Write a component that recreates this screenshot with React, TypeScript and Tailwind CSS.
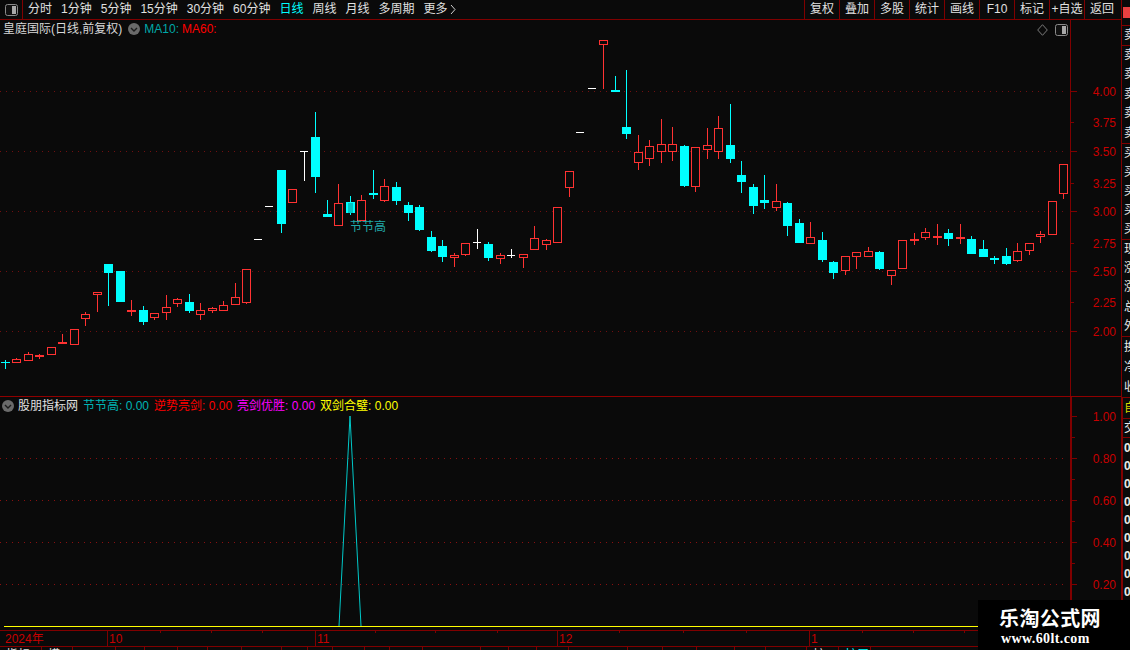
import React from "react";

type C = [number, number, number, number, number, "r" | "c" | "w"];
// x0, wickTop, wickBottom, bodyTop, bodyBottom, colour
const candles: C[] = [
  [1, 360, 369, 362, 363, "c"], [12, 358, 363, 359, 363, "r"], [24, 352, 361, 354, 361, "r"], [35, 354, 359, 355, 357, "r"],
  [47, 347, 355, 347, 355, "r"], [58, 334, 344, 342, 344, "r"], [70, 329, 345, 329, 345, "r"], [81, 312, 326, 314, 319, "r"],
  [93, 292, 312, 292, 295, "r"], [104, 264, 306, 264, 273, "c"], [116, 271, 302, 271, 302, "c"], [127, 300, 316, 310, 312, "r"],
  [139, 306, 325, 310, 322, "c"], [150, 313, 320, 313, 318, "r"], [162, 295, 320, 307, 313, "r"], [173, 298, 307, 299, 304, "r"],
  [185, 294, 313, 302, 311, "c"], [196, 303, 320, 310, 315, "r"], [208, 307, 313, 308, 311, "r"], [219, 301, 311, 305, 311, "r"],
  [231, 283, 305, 297, 305, "r"], [242, 269, 304, 269, 303, "r"], [254, 239, 240, 239, 240, "w"], [265, 206, 207, 206, 207, "w"],
  [277, 170, 233, 170, 224, "c"], [288, 189, 203, 189, 203, "r"], [300, 151, 181, 151, 152, "w"], [311, 112, 193, 137, 177, "c"],
  [323, 200, 217, 214, 217, "c"], [334, 184, 226, 203, 226, "r"], [346, 196, 215, 202, 213, "c"], [357, 195, 221, 200, 221, "r"],
  [369, 170, 199, 193, 195, "c"], [380, 179, 202, 186, 201, "r"], [392, 182, 205, 187, 201, "c"], [404, 202, 221, 205, 213, "c"],
  [415, 205, 231, 207, 230, "c"], [427, 231, 252, 237, 251, "c"], [438, 240, 262, 246, 257, "c"], [450, 253, 267, 255, 258, "r"],
  [461, 243, 256, 243, 255, "r"], [473, 229, 249, 242, 243, "w"], [484, 242, 261, 244, 258, "c"], [496, 253, 264, 255, 259, "r"],
  [507, 249, 258, 255, 256, "w"], [519, 254, 268, 254, 258, "r"], [530, 226, 250, 238, 250, "r"], [542, 239, 250, 240, 245, "r"],
  [553, 207, 243, 207, 243, "r"], [565, 171, 197, 171, 188, "r"], [576, 132, 133, 132, 133, "w"], [588, 88, 89, 88, 89, "w"],
  [599, 40, 89, 40, 45, "r"], [611, 76, 92, 90, 92, "c"], [622, 70, 139, 127, 134, "c"], [634, 135, 170, 152, 163, "r"],
  [645, 140, 166, 146, 159, "r"], [657, 119, 163, 144, 152, "r"], [668, 127, 161, 144, 152, "r"], [680, 145, 187, 146, 186, "c"],
  [691, 147, 192, 147, 187, "r"], [703, 128, 159, 145, 150, "r"], [714, 116, 159, 128, 152, "r"], [726, 104, 163, 145, 159, "c"],
  [737, 161, 193, 175, 182, "c"], [749, 184, 214, 187, 206, "c"], [760, 175, 209, 200, 203, "c"], [772, 184, 211, 201, 208, "r"],
  [783, 202, 236, 203, 226, "c"], [795, 219, 243, 223, 243, "c"], [806, 222, 244, 237, 244, "r"], [818, 232, 262, 240, 260, "c"],
  [829, 261, 279, 262, 273, "c"], [841, 256, 275, 256, 271, "r"], [852, 252, 269, 252, 257, "r"], [864, 247, 257, 251, 257, "r"],
  [875, 251, 270, 252, 269, "c"], [887, 270, 285, 270, 276, "r"], [898, 240, 269, 240, 269, "r"], [910, 233, 245, 239, 241, "r"],
  [921, 228, 240, 232, 238, "r"], [933, 224, 245, 236, 238, "r"], [944, 229, 246, 233, 239, "c"], [956, 224, 244, 237, 239, "r"],
  [967, 236, 254, 239, 254, "c"], [979, 240, 257, 249, 257, "c"], [990, 256, 264, 258, 260, "c"], [1002, 248, 265, 256, 264, "c"],
  [1013, 243, 262, 251, 261, "r"], [1025, 243, 255, 243, 251, "r"], [1036, 231, 243, 234, 237, "r"], [1048, 201, 235, 201, 235, "r"],
  [1059, 164, 199, 164, 194, "r"],
];

const RED = "#ff3232";
const CYAN = "#00ffff";
const LINE = "#800000";
const AXT = "#c80000";

function Candle({ c }: { c: C }) {
  const [x, wt, wb, bt, bb, k] = c;
  if (k === "w") {
    return (
      <g>
        <rect x={x + 4} y={wt} width={1} height={wb - wt} fill="#fff" />
        <rect x={x} y={bt} width={8} height={1} fill="#fff" />
      </g>
    );
  }
  const col = k === "r" ? RED : CYAN;
  const wick = <rect x={x + 4} y={wt} width={1} height={wb - wt} fill={col} />;
  if (k === "c" || bb - bt <= 2) {
    return (
      <g>
        {wick}
        <rect x={x} y={bt} width={9} height={Math.max(bb - bt, 1)} fill={col} />
      </g>
    );
  }
  return (
    <g>
      {wick}
      <rect x={x + 0.5} y={bt + 0.5} width={8} height={bb - bt - 1} fill="#0a0a0a" stroke={col} strokeWidth={1} />
    </g>
  );
}

function Chevron() {
  return (
    <svg width="12" height="12" viewBox="0 0 12 12" className="shrink-0">
      <circle cx="6" cy="6" r="6" fill="#6a6a6a" />
      <path d="M3 5 L6 8 L9 5" fill="none" stroke="#1c1c1c" strokeWidth="1.4" />
    </svg>
  );
}

function PanelIcon() {
  return (
    <svg width="13" height="12" viewBox="0 0 13 12">
      <rect x="0.5" y="0.5" width="12" height="11" rx="2" fill="#111" stroke="#8a8a8a" />
      <rect x="7" y="2" width="4" height="8" fill="#a8a8a8" />
    </svg>
  );
}

const Toolbar = () => {
  const left = ["分时", "1分钟", "5分钟", "15分钟", "30分钟", "60分钟", "日线", "周线", "月线", "多周期", "更多"];
  const right = ["复权", "叠加", "多股", "统计", "画线", "F10", "标记", "+自选", "返回"];
  return (
    <div className="flex h-[20px] shrink-0 items-stretch border-b border-[#800000] text-[12px] leading-[19px] text-[#e0e0e0]">
      <div className="flex w-[23px] shrink-0 items-center justify-center border-r border-[#800000]">
        <PanelIcon />
      </div>
      <div className="flex flex-1 gap-[9px] pl-[5px]">
        {left.map((t) => (
          <span key={t} className={t === "日线" ? "text-[#00ffff]" : ""}>
            {t}
          </span>
        ))}
        <svg width="6" height="19" viewBox="0 0 6 19" className="-ml-[7px]">
          <path d="M1 5 L5 9.5 L1 14" fill="none" stroke="#d0d0d0" />
        </svg>
      </div>
      {right.map((t) => (
        <div key={t} className="flex w-[35px] shrink-0 justify-center whitespace-nowrap border-l border-[#800000]">
          {t}
        </div>
      ))}
      <div className="w-[2px] shrink-0" />
    </div>
  );
};

const priceLabels: [string, number, boolean][] = [
  ["4.00", 91, true], ["3.75", 122, false], ["3.50", 151, true], ["3.25", 183, false], ["3.00", 211, true],
  ["2.75", 243, false], ["2.50", 271, true], ["2.25", 302, false], ["2.00", 331, true],
];

const subLabels: [string, number][] = [["1.00", 416], ["0.80", 458], ["0.60", 500], ["0.40", 542], ["0.20", 584]];
const subMinor = [437, 479, 521, 563, 605];

const fontStack = { fontFamily: '"Liberation Sans","Noto Sans CJK SC",sans-serif' };

function AxisLabels({ items }: { items: [string, number][] }) {
  return (
    <>
      {items.map(([t, y]) => (
        <text key={t} x="1116" y={y + 5} textAnchor="end" fontSize="12" fill={AXT} style={fontStack}>
          {t}
        </text>
      ))}
    </>
  );
}

const MainPane = () => (
  <div className="relative flex h-[376px] shrink-0">
    <svg width="1070" height="376" viewBox="0 20 1070 376" className="block shrink-0">
      {priceLabels.filter((p) => p[2]).map((p) => (
        <line key={p[0]} x1="0" x2="1068" y1={p[1] + 0.5} y2={p[1] + 0.5} stroke="#701010" strokeDasharray="1 5" />
      ))}
      {candles.map((c) => (
        <Candle key={c[0]} c={c} />
      ))}
      <rect x="348" y="203" width="5" height="10" fill="#00c4c4" />
      <text x="350" y="231" fontSize="12" fill="#20a8a8" style={fontStack}>
        节节高
      </text>
    </svg>
    <svg width="51" height="376" viewBox="1070 20 51 376" className="block shrink-0">
      <rect x="1070" y="20" width="1" height="376" fill={LINE} />
      {priceLabels.map((p) => (
        <rect key={p[0]} x="1071" y={p[1]} width={p[2] ? 6 : 3} height="1" fill={LINE} />
      ))}
      <AxisLabels items={priceLabels.map((p) => [p[0], p[1]] as [string, number])} />
    </svg>
    <div className="absolute left-[3px] top-0 flex h-[18px] items-center text-[12px]">
      <span className="text-[#d8d8d8]">皇庭国际(日线,前复权)</span>
      <span className="ml-[6px]">
        <Chevron />
      </span>
      <span className="ml-[4px] text-[#00a8a8]">MA10:</span>
      <span className="ml-[3px] text-[#ff0000]">MA60:</span>
    </div>
    <div className="absolute left-[1037px] top-[4px] flex items-center gap-[7px]">
      <svg width="11" height="12" viewBox="0 0 11 12">
        <path d="M5.5 0.7 L10.3 6 L5.5 11.3 L0.7 6 Z" fill="none" stroke="#7a7a7a" />
      </svg>
      <PanelIcon />
    </div>
  </div>
);

const legend: [string, string][] = [
  ["节节高: 0.00", "text-[#00b4b4]"],
  ["逆势亮剑: 0.00", "text-[#ff0000]"],
  ["亮剑优胜: 0.00", "text-[#ff00ff]"],
  ["双剑合璧: 0.00", "text-[#ffff00]"],
];

const SubPane = () => (
  <div className="relative flex h-[233px] shrink-0">
    <svg width="1070" height="233" viewBox="0 397 1070 233" className="block shrink-0">
      {subLabels.slice(1).map((p) => (
        <line key={p[0]} x1="0" x2="1068" y1={p[1] + 0.5} y2={p[1] + 0.5} stroke="#8a1010" strokeDasharray="1 5" />
      ))}
      <polyline points="339,626 350,416 361,626" fill="none" stroke="#00c8c8" strokeWidth="1" />
      <rect x="4" y="626" width="1066" height="1" fill="#ffff00" />
    </svg>
    <svg width="51" height="233" viewBox="1070 397 51 233" className="block shrink-0">
      <rect x="1070" y="397" width="2" height="233" fill={LINE} />
      {subLabels.map((p) => (
        <rect key={p[0]} x="1072" y={p[1]} width="5" height="1" fill={LINE} />
      ))}
      {subMinor.map((y) => (
        <rect key={y} x="1072" y={y} width="3" height="1" fill={LINE} />
      ))}
      <AxisLabels items={subLabels} />
    </svg>
    <div className="absolute left-[2px] top-[2px] flex h-[14px] items-center text-[12px]">
      <Chevron />
      <span className="ml-[4px] text-[#e0e0e0]">股朋指标网</span>
      <div className="ml-[5px] flex gap-[5px]">
        {legend.map(([t, c]) => (
          <span key={t} className={`whitespace-pre ${c}`}>
            {t}
          </span>
        ))}
      </div>
    </div>
  </div>
);

const months: [string, number][] = [["2024年", 0], ["10", 107], ["11", 315], ["12", 557], ["1", 809]];
const smallTicks = [160, 211, 262, 375, 435, 497, 619, 683, 746, 862, 913, 964];

const TimeAxis = () => (
  <div className="h-[17px] shrink-0 border-y border-[#800000]">
    <svg width="1121" height="15" viewBox="0 631 1121 15" className="block">
      {months.slice(1).map(([, x]) => (
        <rect key={x} x={x} y="631" width="1" height="15" fill={LINE} />
      ))}
      {smallTicks.map((x) => (
        <rect key={x} x={x} y="631" width="1" height="2" fill={LINE} />
      ))}
      {months.map(([t, x]) => (
        <text key={t} x={x === 0 ? 5 : x + 2} y="643" fontSize="12" fill={AXT} style={fontStack}>
          {t}
        </text>
      ))}
    </svg>
  </div>
);

const tabs: [number, string, string?][] = [
  [42, "指标"], [31, "模"], [43, ""], [29, ""], [33, ""], [30, ""], [34, ""], [40, ""], [26, ""], [25, ""], [32, ""], [25, ""],
  [33, ""], [58, ""], [28, ""], [28, ""], [32, ""], [59, ""], [35, ""], [34, ""], [38, ""], [31, ""], [41, ""],
  [32, "扩"], [32, "扩展", "text-[#00ffff]"],
];

const BottomTabs = () => (
  <div className="flex h-[3px] shrink-0 overflow-hidden text-[12px] leading-[16px] text-[#e0e0e0]">
    {tabs.map(([w, t, c], i) => (
      <div key={i} className={`shrink-0 border-r border-[#800000] pl-[6px] ${c ?? ""}`} style={{ width: w }}>
        {t}
      </div>
    ))}
  </div>
);

const Clip = ({ chars, h, step, cls = "text-[#e8e8e8]" }: { chars: string; h: number; step: number; cls?: string }) => (
  <div className={`shrink-0 overflow-hidden border-b border-[#800000] pl-[2px] ${cls}`} style={{ height: h, lineHeight: `${step}px` }}>
    {chars.split("").map((c, i) => (
      <div key={i} className="whitespace-nowrap">
        {c}
      </div>
    ))}
  </div>
);

const SideColumn = () => (
  <div className="flex h-[650px] w-[9px] shrink-0 flex-col overflow-hidden border-l border-[#800000] text-[12px]">
    <div className="h-[26px] shrink-0 border-b border-[#800000] pl-[1px] pt-[7px]">
      <div className="h-[11px] w-[8px] bg-[#e84040]" />
    </div>
    <Clip chars="卖" h={20} step={19} />
    <Clip chars="卖卖卖卖卖" h={98} step={19.4} />
    <Clip chars="买买买买买" h={96} step={19} />
    <Clip chars="现涨涨总外" h={97} step={19.2} />
    <Clip chars="换净收" h={61} step={20} />
    <div className="-ml-[1px] flex h-[21px] shrink-0 items-center overflow-hidden border-b border-l-2 border-[#800000] pl-[1px] text-[#d8d800]">
      自
    </div>
    <div className="-ml-[1px] h-[19px] shrink-0 overflow-hidden border-b border-l-2 border-[#800000] pl-[1px] leading-[18px] text-[#e8e8e8]">
      交
    </div>
    <div className="-ml-[1px] flex flex-1 flex-col overflow-hidden border-l-2 border-[#800000] pl-[1px] pt-[1px] font-bold leading-[18px] text-[#e8e8e8]">
      {[0, 1, 2, 3, 4, 5, 6, 7, 8].map((i) => (
        <div key={i} className="whitespace-nowrap">
          0.00
        </div>
      ))}
    </div>
  </div>
);

export default function App() {
  return (
    <div className="relative flex h-[650px] w-[1130px] overflow-hidden bg-[#0a0a0a]" style={fontStack}>
      <div className="flex w-[1121px] shrink-0 flex-col">
        <Toolbar />
        <MainPane />
        <div className="h-[1px] shrink-0 bg-[#900000]" />
        <SubPane />
        <TimeAxis />
        <BottomTabs />
      </div>
      <SideColumn />
      <div className="absolute bottom-0 right-0 flex h-[50px] w-[152px] flex-col items-start bg-black pl-[21px] pt-[7px] text-white">
        <div
          className="whitespace-nowrap text-[20px] font-bold leading-[24px] tracking-[0.4px]"
          style={{ fontFamily: '"Liberation Serif","Noto Sans CJK SC",serif' }}
        >
          乐淘公式网
        </div>
        <div
          className="ml-[2px] mt-[1px] whitespace-nowrap text-[14px] font-bold leading-[14px] tracking-[0.4px]"
          style={{ fontFamily: '"Liberation Serif",serif' }}
        >
          www.60lt.com
        </div>
      </div>
    </div>
  );
}
